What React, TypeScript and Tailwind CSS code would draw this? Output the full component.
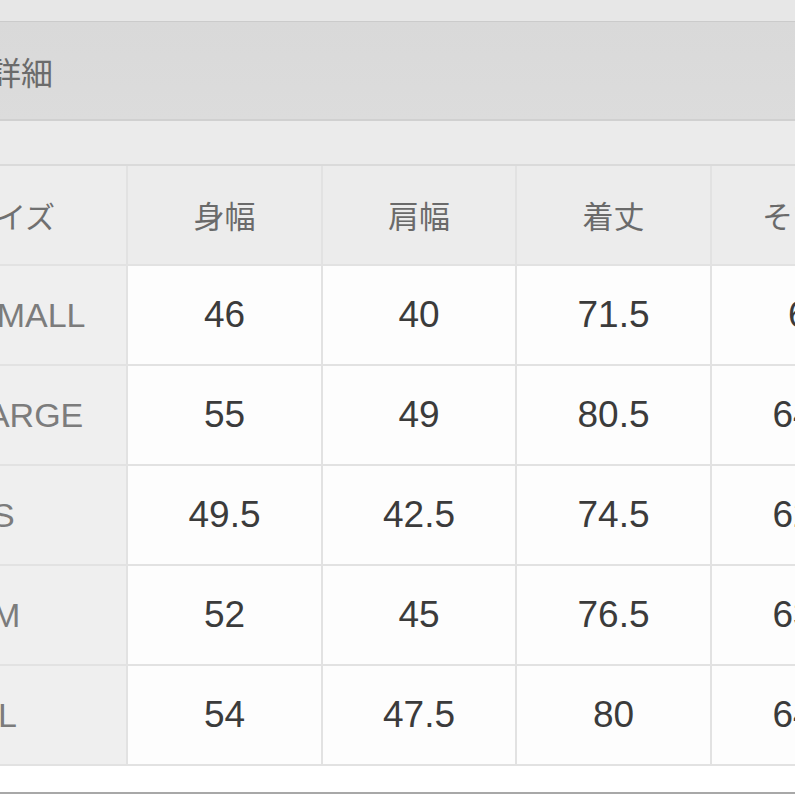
const jp = "font-['Noto_Sans_CJK_JP','Noto_Sans',sans-serif]"
const num = "font-['Liberation_Sans','Noto_Sans_CJK_JP',sans-serif]"

const headers = ["身幅", "肩幅", "着丈", "そで丈"]

// label offset (px) lets the first column stay cropped like the photo
const rows: { label: string; shift: string; values: string[] }[] = [
  { label: "SMALL", shift: "ml-[-26px]", values: ["46", "40", "71.5", "62"] },
  { label: "LARGE", shift: "ml-[-32px]", values: ["55", "49", "80.5", "64.5"] },
  { label: "S", shift: "ml-[-8px]", values: ["49.5", "42.5", "74.5", "62.5"] },
  { label: "M", shift: "ml-[-8px]", values: ["52", "45", "76.5", "63.5"] },
  { label: "L", shift: "ml-[-2px]", values: ["54", "47.5", "80", "64.5"] },
]

export default function App() {
  return (
    <div className="w-[795px] h-[795px] overflow-hidden bg-white flex flex-col">
      {/* top strip */}
      <div className="h-[22px] bg-[#e7e7e7] border-b border-[#cbcbcb] shrink-0" />

      {/* section title */}
      <div className="h-[99px] shrink-0 flex items-center bg-gradient-to-b from-[#d9d9d9] to-[#dcdcdc] border-b-2 border-[#d0d0d0]">
        <span className={`${jp} text-[32px] text-[#6b6b6b] ml-[-11px] leading-none`}>詳細</span>
      </div>

      <div className="h-[45px] shrink-0 bg-[#ebebeb] border-b-2 border-[#dadada]" />

      {/* size table */}
      <div className="w-[905px] grid grid-cols-[126px_193px_192px_193px_193px] auto-rows-[98px] gap-[2px] bg-[#e2e2e2] pb-[2px] shrink-0">
        <div className="bg-[#ededed] flex items-center">
          <span className={`${jp} text-[30px] text-[#707070] ml-[-34px] whitespace-nowrap`}>サイズ</span>
        </div>
        {headers.map((h) => (
          <div key={h} className="bg-[#ececec] flex items-center justify-center">
            <span className={`${jp} text-[31px] text-[#6a6a6a] whitespace-nowrap`}>{h}</span>
          </div>
        ))}

        {rows.map((r) => (
          <>
            <div key={r.label} className="bg-[#efefef] flex items-center overflow-visible">
              <span className={`${num} text-[34px] text-[#7c7c7c] whitespace-nowrap ${r.shift}`}>{r.label}</span>
            </div>
            {r.values.map((v, i) => (
              <div key={r.label + i} className="bg-[#fdfdfd] flex items-center justify-center">
                <span className={`${num} text-[37px] text-[#3b3b3b]`}>{v}</span>
              </div>
            ))}
          </>
        ))}
      </div>

      <div className="flex-1 bg-white" />
      <div className="h-[2px] bg-[#a8a8a8] shrink-0" />
      <div className="h-[1px] bg-white shrink-0" />
    </div>
  )
}
